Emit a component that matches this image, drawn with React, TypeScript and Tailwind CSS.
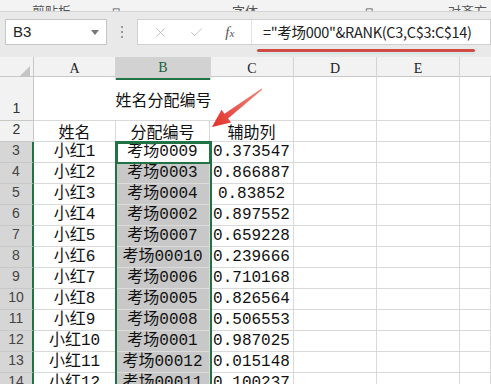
import { X, Check } from 'lucide-react';

const names = ['小红1', '小红2', '小红3', '小红4', '小红5', '小红6', '小红7', '小红8', '小红9', '小红10', '小红11', '小红12'];
const codes = ['考场0009', '考场0003', '考场0004', '考场0002', '考场0007', '考场00010', '考场0006', '考场0005', '考场0008', '考场0001', '考场00012', '考场00011'];
const values = ['0.373547', '0.866887', '0.83852', '0.897552', '0.659228', '0.239666', '0.710168', '0.826564', '0.506553', '0.987025', '0.015148', '0.100237'];

const cellFont = "font-['Liberation_Mono','Noto_Sans_CJK_SC',monospace] text-[16px] text-[#111]";
const grid = 'grid grid-cols-[34px_82px_94px_84px_83px_83px_31px]';

function RowHead({ n, selected }: { n: number; selected?: boolean }) {
  return (
    <div
      className={`flex items-end justify-center pb-[1px] border-b border-[#c8c8c8] font-['Liberation_Sans',sans-serif] text-[14px] ${
        selected ? 'bg-[#d6d6d6] text-[#444] border-r-2 border-r-[#217346]' : 'bg-[#f2f2f2] text-[#333] border-r border-r-[#c8c8c8]'
      }`}
    >
      {n}
    </div>
  );
}

function Cell({ children, className = '' }: { children?: React.ReactNode; className?: string }) {
  return (
    <div className={`flex items-center justify-center border-r border-b border-[#d9d9d9] whitespace-nowrap overflow-hidden ${className}`}>
      {children}
    </div>
  );
}

export default function App() {
  return (
    <div className="relative w-[491px] h-[384px] overflow-hidden bg-white">
      {/* ribbon group labels, cut at the top */}
      <div className="h-[12px] bg-[#f3f3f3] border-b border-[#d4d4d4] overflow-hidden relative">
        <div className="flex items-end h-[12px] font-['Noto_Sans_CJK_SC',sans-serif] text-[13px] text-[#555] leading-none">
          <span className="ml-[32px] mb-[-5px]">剪贴板</span>
          <span className="ml-[41px] mb-[-4px] text-[10px]">⊡</span>
          <span className="ml-[112px] mb-[-5px]">字体</span>
          <span className="ml-[107px] mb-[-4px] text-[10px]">⊡</span>
          <span className="ml-[75px] mb-[-5px]">对齐方</span>
        </div>
      </div>

      {/* formula bar */}
      <div className="h-[45px] bg-[#e9e9e9] flex items-start pt-[7px]">
        <div className="ml-[5px] w-[102px] h-[26px] bg-white border border-[#c6c6c6] flex items-center justify-between px-[7px]">
          <span className="font-['Liberation_Sans',sans-serif] text-[15px] text-[#222]">B3</span>
          <svg width="8" height="5" viewBox="0 0 8 5">
            <path d="M0 0 L8 0 L4 5 Z" fill="#777" />
          </svg>
        </div>
        <div className="w-[30px] h-[26px] flex flex-col items-center justify-center gap-[3px]">
          <span className="w-[2px] h-[2px] bg-[#9a9a9a]" />
          <span className="w-[2px] h-[2px] bg-[#9a9a9a]" />
          <span className="w-[2px] h-[2px] bg-[#9a9a9a]" />
        </div>
        <div className="flex-1 h-[26px] bg-white border border-[#d0d0d0] flex items-center">
          <div className="w-[113px] flex items-center justify-around pl-[4px] pr-[6px]">
            <X size={15} strokeWidth={1.3} color="#b5b5b5" />
            <Check size={15} strokeWidth={1.3} color="#b5b5b5" />
            <span className="font-['Liberation_Serif',serif] italic text-[15px] text-[#555]">
              f<span className="text-[11px]">x</span>
            </span>
          </div>
          <div className="h-full border-l border-[#e2e2e2] pl-[11px] flex items-center font-['Noto_Sans_CJK_SC',sans-serif] text-[14.5px] text-[#222] whitespace-nowrap tracking-[-0.3px]">
            ="考场000"&amp;RANK(C3,C$3:C$14)
          </div>
        </div>
      </div>

      {/* column headers */}
      <div className={`${grid} h-[20px] bg-[#f2f2f2] border-b border-[#c8c8c8] font-['Liberation_Serif',serif] text-[14px] text-[#222]`}>
        <div className="border-r border-[#c8c8c8] flex items-end justify-end pr-[3px] pb-[3px]">
          <svg width="11" height="11" viewBox="0 0 11 11">
            <path d="M11 0 L11 11 L0 11 Z" fill="#c4c4c4" />
          </svg>
        </div>
        <div className="flex items-center justify-center border-r border-[#d4d4d4]">A</div>
        <div className="flex items-center justify-center bg-[#d2d2d2] border-b-2 border-[#217346] text-[#1d5e39]">B</div>
        <div className="flex items-center justify-center border-r border-l border-[#d4d4d4]">C</div>
        <div className="flex items-center justify-center border-r border-[#d4d4d4]">D</div>
        <div className="flex items-center justify-center border-r border-[#d4d4d4]">E</div>
        <div />
      </div>

      {/* sheet */}
      <div className={`${grid} auto-rows-[21px] grid-rows-[44px_21px] ${cellFont}`}>
        <RowHead n={1} />
        <Cell className="col-span-3 font-['Noto_Sans_CJK_SC',sans-serif]">姓名分配编号</Cell>
        <Cell />
        <Cell />
        <Cell />

        <RowHead n={2} />
        <Cell className="font-['Noto_Sans_CJK_SC',sans-serif]">姓名</Cell>
        <Cell className="font-['Noto_Sans_CJK_SC',sans-serif]">分配编号</Cell>
        <Cell className="font-['Noto_Sans_CJK_SC',sans-serif]">辅助列</Cell>
        <Cell />
        <Cell />
        <Cell />

        {names.map((name, i) => (
          <div key={name} className="contents">
            <RowHead n={i + 3} selected />
            <Cell>{name}</Cell>
            <Cell className={i === 0 ? 'bg-white' : 'bg-[#c8c8c8] border-b-[#dcdcdc]'}>{codes[i]}</Cell>
            <Cell>{values[i]}</Cell>
            <Cell />
            <Cell />
            <Cell />
          </div>
        ))}
      </div>

      {/* selection range B3:B14 */}
      <div className="absolute left-[115px] top-[141px] w-[97px] h-[260px] border-2 border-[#217346] pointer-events-none" />
      <div className="absolute left-[116px] top-[142px] w-[95px] h-[22px] border-2 border-[#217346] pointer-events-none" />

      {/* red mark under the formula */}
      <div className="absolute left-[257px] top-[49px] w-[218px] h-[3px] bg-[#cf4a45] rounded-full" />
      <div className="absolute left-[257px] top-[53px] w-[218px] h-[1px] bg-[#bfe8e2]" />

      {/* red arrow */}
      <svg className="absolute left-0 top-0 pointer-events-none" width="491" height="384">
        <defs>
          <linearGradient id="arr" x1="262" y1="89" x2="212" y2="127" gradientUnits="userSpaceOnUse">
            <stop offset="0" stopColor="#f08a80" />
            <stop offset="1" stopColor="#e0302a" />
          </linearGradient>
        </defs>
        <polygon
          points="261.6,88.4 224.5,113.7 221.5,109.7 212,127 231.1,122.5 228.1,118.5 262.4,89.6"
          fill="url(#arr)"
        />
      </svg>
    </div>
  );
}
